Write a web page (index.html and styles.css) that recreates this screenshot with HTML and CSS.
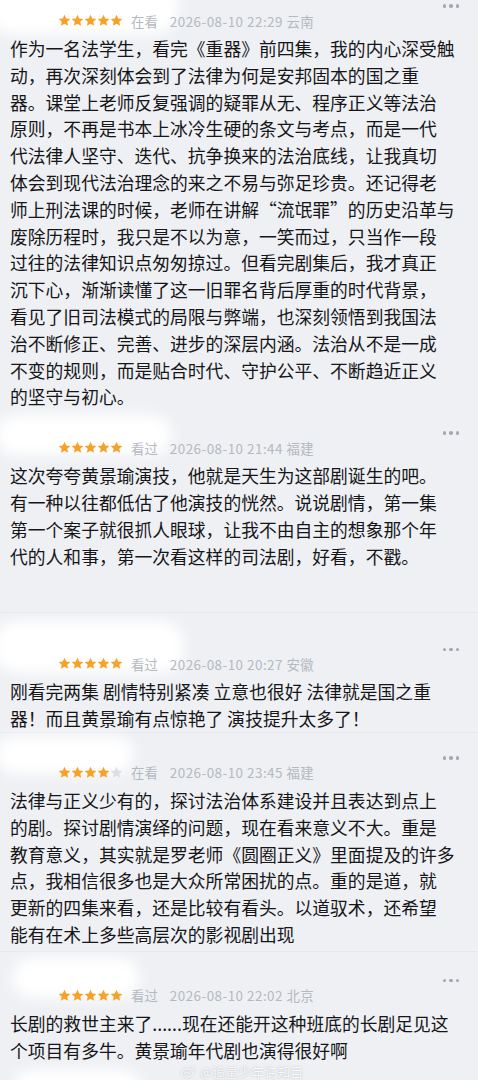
FILE: index.html
```html
<!DOCTYPE html>
<html lang="zh-CN">
<head>
<meta charset="utf-8">
<title>评论</title>
<link rel="stylesheet" href="styles.css">
</head>
<body>
<svg class="defs" aria-hidden="true">
  <symbol id="star" viewBox="0 0 24 24">
    <path d="M12 1.2l3.2 7 7.6.8-5.7 5.2 1.6 7.5L12 17.9l-6.7 3.8 1.6-7.5L1.2 9l7.6-.8z"/>
  </symbol>
</svg>
<main class="feed">
  <article class="review r1">
    <div class="head"><span class="mask"></span><span class="more"><i></i><i></i><i></i></span></div>
    <div class="meta">
      <span class="stars"><svg class="on"><use href="#star"/></svg><svg class="on"><use href="#star"/></svg><svg class="on"><use href="#star"/></svg><svg class="on"><use href="#star"/></svg><svg class="on"><use href="#star"/></svg></span>
      <span class="status">在看</span><span class="time">2026-08-10 22:29 云南</span>
    </div>
    <p class="text">作为一名法学生，看完《重器》前四集，我的内心深受触<br>动，再次深刻体会到了法律为何是安邦固本的国之重<br>器。课堂上老师反复强调的疑罪从无、程序正义等法治<br>原则，不再是书本上冰冷生硬的条文与考点，而是一代<br>代法律人坚守、迭代、抗争换来的法治底线，让我真切<br>体会到现代法治理念的来之不易与弥足珍贵。还记得老<br>师上刑法课的时候，老师在讲解“流氓罪”的历史沿革与<br>废除历程时，我只是不以为意，一笑而过，只当作一段<br>过往的法律知识点匆匆掠过。但看完剧集后，我才真正<br>沉下心，渐渐读懂了这一旧罪名背后厚重的时代背景，<br>看见了旧司法模式的局限与弊端，也深刻领悟到我国法<br>治不断修正、完善、进步的深层内涵。法治从不是一成<br>不变的规则，而是贴合时代、守护公平、不断趋近正义<br>的坚守与初心。</p>
  </article>

  <article class="review r2">
    <div class="head"><span class="mask"></span><span class="more"><i></i><i></i><i></i></span></div>
    <div class="meta">
      <span class="stars"><svg class="on"><use href="#star"/></svg><svg class="on"><use href="#star"/></svg><svg class="on"><use href="#star"/></svg><svg class="on"><use href="#star"/></svg><svg class="on"><use href="#star"/></svg></span>
      <span class="status">看过</span><span class="time">2026-08-10 21:44 福建</span>
    </div>
    <p class="text">这次夸夸黄景瑜演技，他就是天生为这部剧诞生的吧。<br>有一种以往都低估了他演技的恍然。说说剧情，第一集<br>第一个案子就很抓人眼球，让我不由自主的想象那个年<br>代的人和事，第一次看这样的司法剧，好看，不戳。</p>
  </article>

  <article class="review r3">
    <div class="head"><span class="mask"></span><span class="more"><i></i><i></i><i></i></span></div>
    <div class="meta">
      <span class="stars"><svg class="on"><use href="#star"/></svg><svg class="on"><use href="#star"/></svg><svg class="on"><use href="#star"/></svg><svg class="on"><use href="#star"/></svg><svg class="on"><use href="#star"/></svg></span>
      <span class="status">看过</span><span class="time">2026-08-10 20:27 安徽</span>
    </div>
    <p class="text">刚看完两集 剧情特别紧凑 立意也很好 法律就是国之重<br>器！而且黄景瑜有点惊艳了 演技提升太多了！</p>
  </article>

  <article class="review r4">
    <div class="head"><span class="mask"></span><span class="more"><i></i><i></i><i></i></span></div>
    <div class="meta">
      <span class="stars"><svg class="on"><use href="#star"/></svg><svg class="on"><use href="#star"/></svg><svg class="on"><use href="#star"/></svg><svg class="on"><use href="#star"/></svg><svg class="off"><use href="#star"/></svg></span>
      <span class="status">在看</span><span class="time">2026-08-10 23:45 福建</span>
    </div>
    <p class="text">法律与正义少有的，探讨法治体系建设并且表达到点上<br>的剧。探讨剧情演绎的问题，现在看来意义不大。重是<br>教育意义，其实就是罗老师《圆圈正义》里面提及的许多<br>点，我相信很多也是大众所常困扰的点。重的是道，就<br>更新的四集来看，还是比较有看头。以道驭术，还希望<br>能有在术上多些高层次的影视剧出现</p>
  </article>

  <article class="review r5">
    <div class="head"><span class="mask"></span><span class="more"><i></i><i></i><i></i></span></div>
    <div class="meta">
      <span class="stars"><svg class="on"><use href="#star"/></svg><svg class="on"><use href="#star"/></svg><svg class="on"><use href="#star"/></svg><svg class="on"><use href="#star"/></svg><svg class="on"><use href="#star"/></svg></span>
      <span class="status">看过</span><span class="time">2026-08-10 22:02 北京</span>
    </div>
    <p class="text">长剧的救世主来了......现在还能开这种班底的长剧足见这<br>个项目有多牛。黄景瑜年代剧也演得很好啊</p>
    <span class="mask mask-tail"></span>
    <div class="watermark">
      <svg class="wb" viewBox="0 0 24 20"><path d="M10 5.5C5.5 6 2 9 2.3 12.4 2.6 15.6 6.6 17.6 11 17.2c4.5-.4 7.8-3.2 7.5-6.4-.2-1.8-1.7-2.5-3-2.3.6-1.5.2-3-1.5-2.8-1.2.1-2.3.8-2.3.8s.2-1.4-1.7-1z" fill="none" stroke="currentColor" stroke-width="1.4"/><ellipse cx="10" cy="12.5" rx="3.2" ry="2.4" fill="none" stroke="currentColor" stroke-width="1.2"/><path d="M17 3.2c2 .3 3.5 1.8 3.6 3.8M17.2 5.5c.9.2 1.5.8 1.6 1.7" fill="none" stroke="currentColor" stroke-width="1.2" stroke-linecap="round"/></svg>
      <span>@追星少年许知目</span>
    </div>
  </article>
</main>
</body>
</html>
```

FILE: styles.css
```css
html, body {
  margin: 0;
  padding: 0;
}
body {
  background: #eef0f4;
  font-family: "Noto Sans CJK SC", "Noto Sans", sans-serif;
  color: #161618;
  width: 478px;
  overflow: hidden;
}
.defs {
  position: absolute;
  width: 0;
  height: 0;
  overflow: hidden;
}
.feed {
  position: relative;
  display: flex;
  flex-direction: column;
}
.review {
  position: relative;
  padding: 0 19px 0 10px;
}
.r1 { padding-bottom: 17px; }
.r2 { padding-bottom: 43px; border-bottom: 1px solid #e5e7eb; }
.r3 { padding-top: 30px; border-bottom: 1px solid #e5e7eb; }
.r4 { padding-top: 19px; padding-bottom: 3px; border-bottom: 1px solid #e6e8ec; }
.r5 { padding-top: 23px; height: 110px; }

.head {
  position: relative;
  height: 12px;
  display: flex;
  justify-content: flex-end;
  align-items: center;
}
.mask {
  position: absolute;
  z-index: 0;
  background: #ffffff;
  border-radius: 22px;
  filter: blur(7px);
}
.r1 .mask { left: -22px; top: -24px; width: 190px; height: 58px; }
.r2 .mask { left: -14px; top: -12px; width: 176px; height: 40px; }
.r3 .mask { left: -16px; top: -22px; width: 190px; height: 52px; }
.r4 .mask { left: -14px; top: -16px; width: 138px; height: 38px; }
.r5 .head .mask { left: 2px; top: -17px; width: 128px; height: 40px; }
.mask-tail { left: 12px; top: 118px; width: 130px; height: 40px; }

.more {
  position: relative;
  z-index: 1;
  display: flex;
  gap: 3px;
}
.more i {
  width: 3.5px;
  height: 3.5px;
  border-radius: 50%;
  background: #a4a8b0;
}
.meta {
  position: relative;
  z-index: 1;
  height: 17px;
  margin-left: 48px;
  display: flex;
  align-items: center;
  font-size: 13.4px;
  color: #b5b9c0;
  white-space: nowrap;
}
.stars {
  display: flex;
  width: 65px;
  height: 13px;
}
.stars svg {
  width: 13px;
  height: 13px;
  flex: none;
}
.stars .on { fill: #f8a127; }
.stars .off { fill: #dcdee2; }
.status {
  margin-left: 8px;
}
.time {
  margin-left: 12px;
  letter-spacing: 0.5px;
}
.text {
  position: relative;
  z-index: 1;
  margin: 6px 0 0;
  font-size: 17.8px;
  line-height: 26.8px;
  white-space: nowrap;
}
.watermark {
  position: absolute;
  z-index: 2;
  left: 180px;
  top: 113px;
  display: flex;
  align-items: center;
  gap: 3px;
  color: rgba(255, 255, 255, 0.92);
  font-size: 13px;
  line-height: 14px;
  text-shadow: 0 0 1.5px rgba(120, 120, 130, 0.55);
}
.wb {
  width: 17px;
  height: 14px;
  filter: drop-shadow(0 0 1px rgba(120, 120, 130, 0.5));
}
```
